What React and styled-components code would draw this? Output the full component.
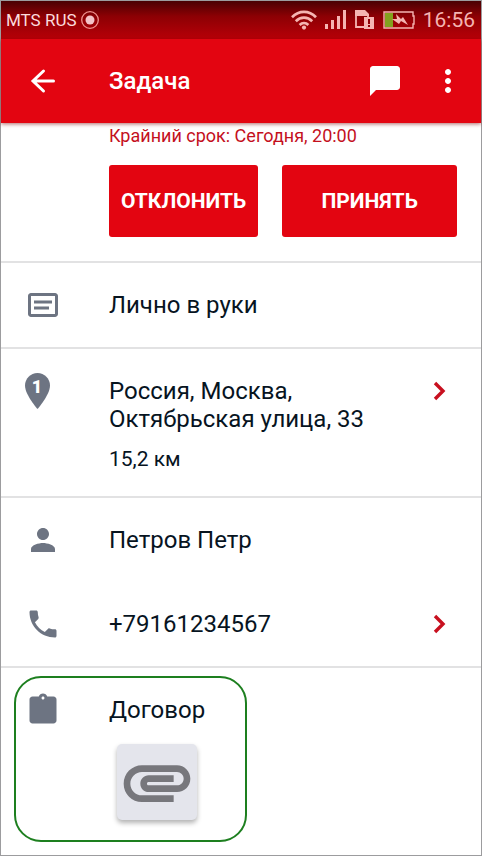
import styled, { createGlobalStyle } from 'styled-components';

const GlobalStyle = createGlobalStyle`
  * {
    box-sizing: border-box;
  }

  body {
    margin: 0;
    background: #fff;
    font-family: Roboto, "Liberation Sans", sans-serif;
    color: #07141f;
  }
`;

const Screen = styled.div`
  display: flex;
  flex-direction: column;
  min-height: 100vh;
  border: 1px solid #9c9c9e;
`;

const StatusBar = styled.div`
  display: flex;
  align-items: center;
  justify-content: space-between;
  height: 38px;
  padding: 0 6px 0 5px;
  background: linear-gradient(#4a0002, #8c0004 40%, #b80008);
  color: #fbdcdc;
`;

const StatusGroup = styled.div`
  display: flex;
  align-items: center;
  gap: ${props => props.$gap}px;
`;

const Carrier = styled.span`
  font-size: 17px;
  line-height: 24px;
`;

const Clock = styled.span`
  font-size: 21px;
  line-height: 24px;
  color: #f5b5b2;
`;

const AppBar = styled.header`
  display: flex;
  align-items: center;
  height: 84px;
  padding: 0 15px 0 24px;
  background: #e30511;
  color: #fff;
  box-shadow: 0 1px 4px rgba(120, 0, 0, 0.6);
`;

const Title = styled.h1`
  flex: 1;
  margin: 0 0 0 48px;
  font-size: 24px;
  line-height: 28px;
  font-weight: 500;
`;

const Actions = styled.div`
  display: flex;
  gap: 27px;
`;

const IconButton = styled.button`
  display: flex;
  padding: 0;
  border: none;
  background: none;
  color: inherit;
  cursor: pointer;
`;

const Section = styled.section`
  border-bottom: 2px solid #e2e2e3;
`;

const Summary = styled(Section)`
  padding: 0 24px 24px 108px;
`;

const Deadline = styled.p`
  margin: 0 0 16px;
  font-size: 18px;
  line-height: 26px;
  color: #c4101d;
`;

const ButtonRow = styled.div`
  display: flex;
  gap: 24px;
`;

const Button = styled.button`
  flex: ${props => (props.$grow ? 1 : 'none')};
  height: 72px;
  padding: 0 12px;
  border: none;
  border-radius: 3px;
  background: #e30511;
  color: #fff;
  font-family: inherit;
  font-size: 21px;
  font-weight: 700;
  cursor: pointer;
`;

const Row = styled.div`
  display: flex;
  align-items: flex-start;
  padding: 28px 24px;
`;

const IconSlot = styled.div`
  display: flex;
  flex: none;
  align-items: center;
  width: 84px;
  height: 28px;
  color: #6d7482;

  svg {
    flex: none;
  }
`;

const RowBody = styled.div`
  flex: 1;
  font-size: 24px;
  line-height: 28px;
`;

const Distance = styled.div`
  margin: 12px 0 -5px;
  font-size: 21px;
`;

const PhoneLink = styled.a`
  color: inherit;
  text-decoration: none;
`;

const ChevronButton = styled(IconButton)`
  align-items: center;
  height: 28px;
  color: #c8101f;
`;

const DocumentCard = styled.section`
  display: flex;
  align-self: flex-start;
  margin: 8px 0 13px 13px;
  padding: 18px 40px 20px 9px;
  border: 2px solid #1d7f1f;
  border-radius: 27px;
`;

const FileButton = styled.button`
  display: flex;
  align-items: center;
  justify-content: center;
  width: 80px;
  height: 76px;
  margin: 20px 0 0 8px;
  padding: 0;
  border: none;
  border-radius: 5px;
  background: #e4e5ec;
  color: #77777c;
  box-shadow: 0 3px 5px rgba(0, 0, 0, 0.3);
  cursor: pointer;

  svg {
    flex: none;
  }
`;

const PinLabel = styled.text`
  font-family: Roboto, "Liberation Sans", sans-serif;
  font-size: 18px;
  font-weight: 900;
  fill: #fff;
`;

function Icon({ d, size = 36 }) {
  return (
    <svg width={size} height={size} viewBox="0 0 24 24" fill="currentColor" aria-hidden="true">
      <path fillRule="evenodd" d={d} />
    </svg>
  );
}

const paths = {
  chat: 'M20 2H4c-1.1 0-2 .9-2 2v18l4-4h14c1.1 0 2-.9 2-2V4c0-1.1-.9-2-2-2z',
  more: 'M12 8c1.1 0 2-.9 2-2s-.9-2-2-2-2 .9-2 2 .9 2 2 2zm0 2c-1.1 0-2 .9-2 2s.9 2 2 2 2-.9 2-2-.9-2-2-2zm0 6c-1.1 0-2 .9-2 2s.9 2 2 2 2-.9 2-2-.9-2-2-2z',
  note: 'M4 4h16c1.1 0 2 .9 2 2v12c0 1.1-.9 2-2 2H4c-1.1 0-2-.9-2-2V6c0-1.1.9-2 2-2zm0 2v12h16V6zM6 9h12v2H6zM6 13h10v2H6z',
  person: 'M12 12c2.21 0 4-1.79 4-4s-1.79-4-4-4-4 1.79-4 4 1.79 4 4 4zm0 2c-2.67 0-8 1.34-8 4v2h16v-2c0-2.66-5.33-4-8-4z',
  phone: 'M6.62 10.79c1.44 2.83 3.76 5.14 6.59 6.59l2.2-2.2c.27-.27.67-.36 1.02-.24 1.12.37 2.33.57 3.57.57.55 0 1 .45 1 1V20c0 .55-.45 1-1 1-9.39 0-17-7.61-17-17 0-.55.45-1 1-1h3.5c.55 0 1 .45 1 1 0 1.25.2 2.45.57 3.57.11.35.03.74-.25 1.02l-2.2 2.2z',
  clipboard: 'M19 3h-4.18C14.4 1.84 13.3 1 12 1s-2.4.84-2.82 2H5c-1.1 0-2 .9-2 2v14c0 1.1.9 2 2 2h14c1.1 0 2-.9 2-2V5c0-1.1-.9-2-2-2zm-7 0c.55 0 1 .45 1 1s-.45 1-1 1-1-.45-1-1 .45-1 1-1z',
  attachment: 'M2 12.5C2 9.46 4.46 7 7.5 7H18c2.21 0 4 1.79 4 4s-1.79 4-4 4H9.5C8.12 15 7 13.88 7 12.5S8.12 10 9.5 10H17v2H9.41c-.55 0-.55 1 0 1H18c1.1 0 2-.9 2-2s-.9-2-2-2H7.5C5.57 9 4 10.57 4 12.5S5.57 16 7.5 16H17v2H7.5C4.46 18 2 15.54 2 12.5z',
};

function BackIcon() {
  return (
    <svg width="36" height="36" viewBox="0 0 36 36" fill="none" stroke="currentColor" strokeWidth="3" strokeLinecap="round" aria-hidden="true">
      <path d="M28.500 18H8.500M18.500 8L8 18l10.500 10" />
    </svg>
  );
}

function ChevronIcon() {
  return (
    <svg width="36" height="28" viewBox="0 0 36 28" fill="none" stroke="currentColor" strokeWidth="3.4" aria-hidden="true">
      <path d="M14 6l8 8-8 8" />
    </svg>
  );
}

function PinIcon() {
  return (
    <svg width="25" height="36" viewBox="0 0 25 36" aria-hidden="true">
      <path fill="currentColor" d="M12.5 0C5.6 0 0 5.6 0 12.5 0 21.9 12.5 36 12.5 36S25 21.9 25 12.5C25 5.6 19.4 0 12.5 0z" />
      <PinLabel x="12" y="20" textAnchor="middle">1</PinLabel>
    </svg>
  );
}

function RecordIcon() {
  return (
    <svg width="18" height="18" viewBox="0 0 18 18" aria-hidden="true">
      <circle cx="9" cy="9" r="8.3" fill="none" stroke="#f0918f" strokeWidth="1.3" />
      <circle cx="9" cy="9" r="4.5" fill="#f3c3c8" />
    </svg>
  );
}

function WifiIcon() {
  return (
    <svg width="26" height="20" viewBox="0 0 26 20" fill="none" stroke="#f5b5b2" strokeWidth="2.7" aria-hidden="true">
      <path d="M1 7.2C8 .2 18 .2 25 7.2M4.8 11.2c4.7-4.7 11.7-4.7 16.4 0M8.6 15c2.6-2.5 6.2-2.5 8.800 0" />
      <circle cx="13" cy="17.6" r="2.1" fill="#f5b5b2" stroke="none" />
    </svg>
  );
}

function SignalIcon() {
  return (
    <svg width="22" height="20" viewBox="0 0 22 20" fill="#f5b5b2" aria-hidden="true">
      <path d="M0 14h3v5H0zM6 10h3v9H6zM12 6h3v13h-3zM18 0h3v19h-3z" />
    </svg>
  );
}

function SimIcon() {
  return (
    <svg width="20" height="20" viewBox="0 0 20 20" aria-hidden="true">
      <path fill="none" stroke="#f5b5b2" strokeWidth="1.8" d="M9 17H1V5M13 8V5" />
      <path fill="#f5b5b2" d="M0 0h10l4 4v2H0zM9 7h10v12H9z" />
      <path fill="#8f0005" d="M13 9h2v5h-2zM13 15h2v2h-2z" />
    </svg>
  );
}

function BatteryIcon() {
  return (
    <svg width="32" height="18" viewBox="0 0 32 18" aria-hidden="true">
      <path fill="none" stroke="#f5b5b2" strokeWidth="1.4" d="M1 1h29v4h1v8h-1v4H1z" />
      <path fill="#83a11f" d="M2 2h8v14H2z" />
      <path fill="#f5b5b2" d="M13 3l5 5 2-2 5 8-7-4-2 3-7-5h5z" />
    </svg>
  );
}

function App() {
  return (
    <>
      <GlobalStyle />
      <Screen>
        <StatusBar>
          <StatusGroup $gap={4}>
            <Carrier>MTS RUS</Carrier>
            <RecordIcon />
          </StatusGroup>
          <StatusGroup $gap={8}>
            <WifiIcon />
            <SignalIcon />
            <SimIcon />
            <BatteryIcon />
            <Clock>16:56</Clock>
          </StatusGroup>
        </StatusBar>

        <AppBar>
          <IconButton type="button" aria-label="Назад">
            <BackIcon />
          </IconButton>
          <Title>Задача</Title>
          <Actions>
            <IconButton type="button" aria-label="Чат">
              <Icon d={paths.chat} />
            </IconButton>
            <IconButton type="button" aria-label="Меню">
              <Icon d={paths.more} />
            </IconButton>
          </Actions>
        </AppBar>

        <Summary>
          <Deadline>Крайний срок: Сегодня, 20:00</Deadline>
          <ButtonRow>
            <Button type="button">ОТКЛОНИТЬ</Button>
            <Button type="button" $grow>ПРИНЯТЬ</Button>
          </ButtonRow>
        </Summary>

        <Section>
          <Row>
            <IconSlot><Icon d={paths.note} /></IconSlot>
            <RowBody>Лично в руки</RowBody>
          </Row>
        </Section>

        <Section>
          <Row>
            <IconSlot><PinIcon /></IconSlot>
            <RowBody>
              Россия, Москва, Октябрьская улица, 33
              <Distance>15,2 км</Distance>
            </RowBody>
            <ChevronButton type="button" aria-label="Открыть карту">
              <ChevronIcon />
            </ChevronButton>
          </Row>
        </Section>

        <Section>
          <Row>
            <IconSlot><Icon d={paths.person} /></IconSlot>
            <RowBody>Петров Петр</RowBody>
          </Row>
          <Row>
            <IconSlot><Icon d={paths.phone} /></IconSlot>
            <RowBody>
              <PhoneLink href="tel:+79161234567">+79161234567</PhoneLink>
            </RowBody>
            <ChevronButton type="button" aria-label="Позвонить">
              <ChevronIcon />
            </ChevronButton>
          </Row>
        </Section>

        <DocumentCard>
          <IconSlot><Icon d={paths.clipboard} /></IconSlot>
          <RowBody>
            Договор
            <FileButton type="button" aria-label="Открыть договор">
              <Icon d={paths.attachment} size={80} />
            </FileButton>
          </RowBody>
        </DocumentCard>
      </Screen>
    </>
  );
}

export default App;
